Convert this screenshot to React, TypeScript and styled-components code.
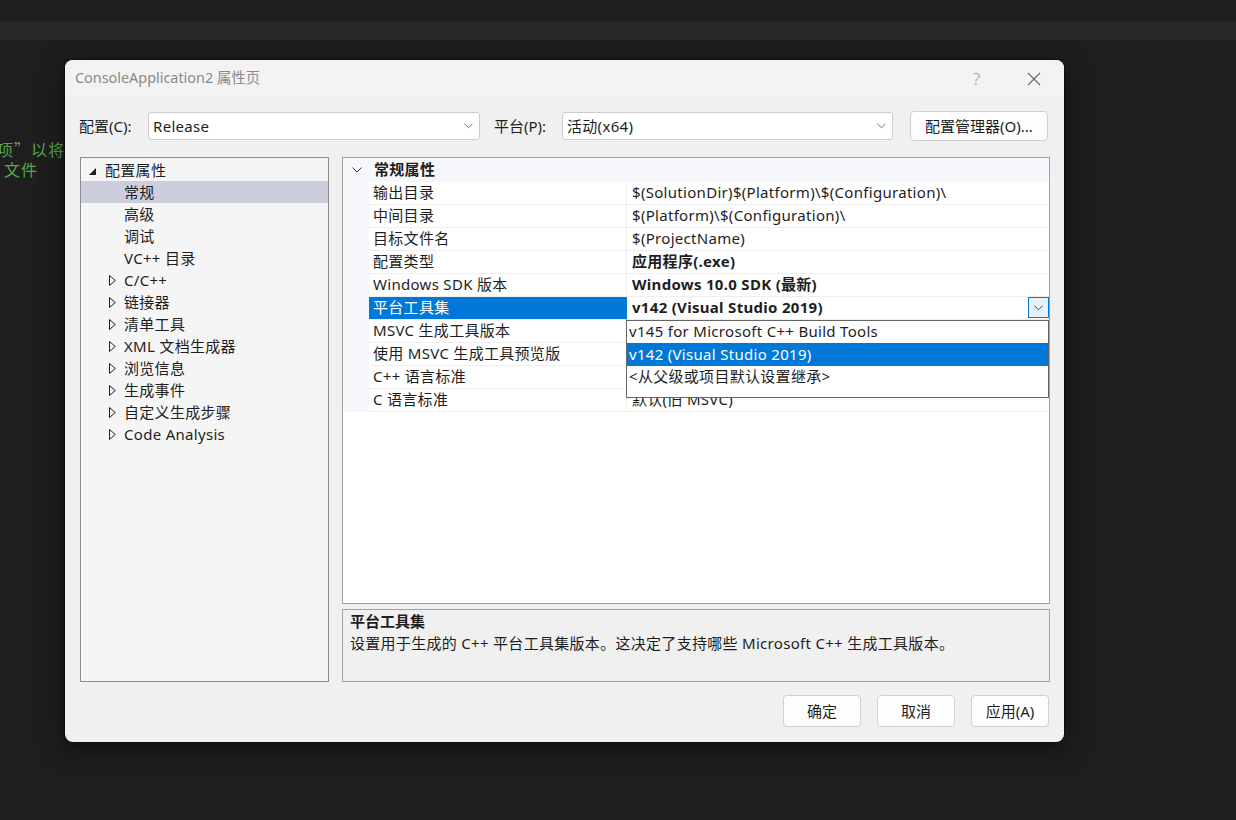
import styled, { createGlobalStyle, css } from 'styled-components'

const FONT = `"Noto Sans", "Noto Sans CJK SC", sans-serif`

const GlobalStyle = createGlobalStyle`
  html, body {
    margin: 0;
    padding: 0;
    background: #1e1e1e;
    overflow: hidden;
  }
  body {
    font-family: ${FONT};
  }
`

interface TreeItem {
  label: string
  level: number
  icon?: 'open' | 'closed'
  selected?: boolean
}

const treeItems: TreeItem[] = [
  { label: '配置属性', level: 0, icon: 'open' },
  { label: '常规', level: 1, selected: true },
  { label: '高级', level: 1 },
  { label: '调试', level: 1 },
  { label: 'VC++ 目录', level: 1 },
  { label: 'C/C++', level: 1, icon: 'closed' },
  { label: '链接器', level: 1, icon: 'closed' },
  { label: '清单工具', level: 1, icon: 'closed' },
  { label: 'XML 文档生成器', level: 1, icon: 'closed' },
  { label: '浏览信息', level: 1, icon: 'closed' },
  { label: '生成事件', level: 1, icon: 'closed' },
  { label: '自定义生成步骤', level: 1, icon: 'closed' },
  { label: 'Code Analysis', level: 1, icon: 'closed' },
]

interface Prop {
  name: string
  value: string
  bold?: boolean
  selected?: boolean
}

const props: Prop[] = [
  { name: '输出目录', value: '$(SolutionDir)$(Platform)\\$(Configuration)\\' },
  { name: '中间目录', value: '$(Platform)\\$(Configuration)\\' },
  { name: '目标文件名', value: '$(ProjectName)' },
  { name: '配置类型', value: '应用程序(.exe)', bold: true },
  { name: 'Windows SDK 版本', value: 'Windows 10.0 SDK (最新)', bold: true },
  { name: '平台工具集', value: 'v142 (Visual Studio 2019)', bold: true, selected: true },
  { name: 'MSVC 生成工具版本', value: '' },
  { name: '使用 MSVC 生成工具预览版', value: '' },
  { name: 'C++ 语言标准', value: '' },
  { name: 'C 语言标准', value: '默认(旧 MSVC)' },
]

const options = [
  { label: 'v145 for Microsoft C++ Build Tools' },
  { label: 'v142 (Visual Studio 2019)', active: true },
  { label: '<从父级或项目默认设置继承>' },
]

const Chevron = ({ size = 9, color = '#606060' }: { size?: number; color?: string }) => (
  <svg width={size} height={Math.round(size / 2) + 1} viewBox="0 0 10 6">
    <path d="M0.5 0.5 L5 5 L9.5 0.5" fill="none" stroke={color} strokeWidth="1" />
  </svg>
)

const TreeGlyph = ({ kind }: { kind: 'open' | 'closed' }) =>
  kind === 'open' ? (
    <svg width="7" height="7" viewBox="0 0 7 7">
      <polygon points="7,0 7,7 0,7" fill="#1e1e1e" />
    </svg>
  ) : (
    <svg width="7" height="11" viewBox="0 0 7 11">
      <polygon points="0.5,0.5 6.3,5.5 0.5,10.5" fill="none" stroke="#1e1e1e" strokeWidth="1" />
    </svg>
  )

export default function App() {
  return (
    <>
      <GlobalStyle />
      <Screen>
        <TopBand />
        <Editor>
          <CodeLine $indent={-3}>项”以将</CodeLine>
          <CodeLine $indent={4}>文件</CodeLine>
        </Editor>

        <Dialog>
          <TitleBar>
            <Title>ConsoleApplication2 属性页</Title>
            <TitleButton>?</TitleButton>
            <TitleButton>
              <svg width="14" height="14" viewBox="0 0 14 14">
                <path d="M1 1 L13 13 M13 1 L1 13" stroke="#6a6a6a" strokeWidth="1.1" />
              </svg>
            </TitleButton>
          </TitleBar>

          <Body>
            <ConfigRow>
              <FieldLabel>配置(C):</FieldLabel>
              <Select $width={332}>
                <span>Release</span>
                <Chevron />
              </Select>
              <FieldLabel>平台(P):</FieldLabel>
              <Select $width={331}>
                <span>活动(x64)</span>
                <Chevron />
              </Select>
              <Button $width={138} $height={30}>配置管理器(O)...</Button>
            </ConfigRow>

            <Main>
              <Tree>
                {treeItems.map((item) => (
                  <TreeRow key={item.label} $level={item.level} $selected={item.selected}>
                    <GlyphSlot $level={item.level}>{item.icon && <TreeGlyph kind={item.icon} />}</GlyphSlot>
                    {item.label}
                  </TreeRow>
                ))}
              </Tree>

              <RightColumn>
                <Grid>
                  <GroupHeader>
                    <GroupToggle>
                      <Chevron size={10} color="#333" />
                    </GroupToggle>
                    <GroupTitle>常规属性</GroupTitle>
                  </GroupHeader>
                  {props.map((p) => (
                    <PropRow key={p.name}>
                      <Gutter />
                      <NameCell $selected={p.selected}>{p.name}</NameCell>
                      <ValueCell $bold={p.bold}>
                        <span>{p.value}</span>
                        {p.selected && (
                          <DropButton>
                            <Chevron size={9} color="#333" />
                          </DropButton>
                        )}
                      </ValueCell>
                    </PropRow>
                  ))}
                  <GridFill>
                    <Gutter />
                  </GridFill>

                  <DropList>
                    {options.map((o) => (
                      <DropItem key={o.label} $active={o.active}>
                        {o.label}
                      </DropItem>
                    ))}
                  </DropList>
                </Grid>

                <Description>
                  <DescTitle>平台工具集</DescTitle>
                  <DescText>设置用于生成的 C++ 平台工具集版本。这决定了支持哪些 Microsoft C++ 生成工具版本。</DescText>
                </Description>
              </RightColumn>
            </Main>

            <Footer>
              <Button $width={78} $height={32}>确定</Button>
              <Button $width={78} $height={32}>取消</Button>
              <Button $width={78} $height={32}>应用(A)</Button>
            </Footer>
          </Body>
        </Dialog>
      </Screen>
    </>
  )
}

const Screen = styled.div`
  position: relative;
  width: 1236px;
  height: 820px;
  background: #1e1e1e;
  overflow: hidden;
`

const TopBand = styled.div`
  margin-top: 21px;
  height: 19px;
  background: #282828;
`

const Editor = styled.div`
  padding-top: 99px;
  display: flex;
  flex-direction: column;
`

const CodeLine = styled.div<{ $indent: number }>`
  margin-left: ${({ $indent }) => $indent}px;
  font-family: "Noto Sans CJK SC", sans-serif;
  font-size: 16px;
  line-height: 20px;
  letter-spacing: 1px;
  color: #57a64a;
  white-space: nowrap;
`

const Dialog = styled.div`
  position: absolute;
  left: 65px;
  top: 60px;
  width: 999px;
  height: 682px;
  border-radius: 8px;
  background: #f0f0f0;
  box-shadow: 0 6px 24px rgba(0, 0, 0, 0.55), 0 0 0 1px rgba(0, 0, 0, 0.35);
  display: flex;
  flex-direction: column;
  overflow: hidden;
  font-family: ${FONT};
  font-size: 15px;
  color: #1e1e1e;
`

const TitleBar = styled.div`
  height: 37px;
  background: #f3f3f3;
  display: flex;
  align-items: center;
  padding-left: 10px;
`

const Title = styled.div`
  flex: 1;
  font-size: 14.4px;
  color: #8a8a8a;
  line-height: 20px;
  margin-top: -2px;
`

const TitleButton = styled.div`
  width: 57px;
  height: 37px;
  display: flex;
  align-items: center;
  justify-content: center;
  color: #9a9a9a;
  font-size: 17px;
  font-weight: 300;
  &:last-child {
    margin-right: 2px;
  }
`

const Body = styled.div`
  flex: 1;
  display: flex;
  flex-direction: column;
  padding: 14px 15px 0 15px;
  letter-spacing: 0.3px;
`

const ConfigRow = styled.div`
  display: flex;
  align-items: center;
  height: 30px;
`

const FieldLabel = styled.div`
  width: 68px;
  flex-shrink: 0;
  line-height: 20px;
  letter-spacing: 0;
  &:first-child {
    margin-left: -1px;
    width: 69px;
  }
  &:nth-child(3) {
    margin-left: 14px;
  }
`

const Select = styled.div<{ $width: number }>`
  width: ${({ $width }) => $width}px;
  height: 28px;
  box-sizing: border-box;
  background: #ffffff;
  border: 1px solid #cccccc;
  border-radius: 3px;
  display: flex;
  align-items: center;
  justify-content: space-between;
  padding: 0 6px 0 4px;
  line-height: 20px;
`

const Button = styled.div<{ $width: number; $height: number }>`
  width: ${({ $width }) => $width}px;
  height: ${({ $height }) => $height}px;
  box-sizing: border-box;
  background: #fdfdfd;
  border: 1px solid #d0d0d0;
  border-radius: 4px;
  display: flex;
  align-items: center;
  justify-content: center;
  line-height: 20px;
  letter-spacing: 0;
  margin-left: 16px;
  &:first-child {
    margin-left: 0;
  }
  ${ConfigRow} & {
    margin-left: 17px;
  }
`

const Main = styled.div`
  margin-top: 16px;
  display: grid;
  grid-template-columns: 249px 708px;
  column-gap: 13px;
  height: 525px;
`

const Tree = styled.div`
  box-sizing: border-box;
  border: 1px solid #8c8c8c;
  background: #f5f5f5;
  padding-top: 1px;
`

const TreeRow = styled.div<{ $level: number; $selected?: boolean }>`
  height: 22px;
  line-height: 22px;
  display: flex;
  align-items: center;
  padding-left: ${({ $level }) => 5 + $level * 19}px;
  white-space: nowrap;
  ${({ $selected }) =>
    $selected &&
    css`
      background: #cccedb;
    `}
`

const GlyphSlot = styled.div<{ $level: number }>`
  width: 19px;
  height: 22px;
  display: flex;
  align-items: center;
  padding-left: ${({ $level }) => ($level === 0 ? 3 : 4)}px;
  box-sizing: border-box;
  svg {
    margin-top: ${({ $level }) => ($level === 0 ? 3 : 0)}px;
  }
`

const RightColumn = styled.div`
  display: flex;
  flex-direction: column;
  gap: 5px;
`

const Grid = styled.div`
  position: relative;
  height: 447px;
  box-sizing: border-box;
  border: 1px solid #a0a0a0;
  background: #ffffff;
  display: flex;
  flex-direction: column;
`

const GroupHeader = styled.div`
  height: 24px;
  background: #f5f7fa;
  display: flex;
  align-items: center;
`

const GroupToggle = styled.div`
  width: 26px;
  display: flex;
  justify-content: center;
  padding-left: 1px;
`

const GroupTitle = styled.div`
  font-weight: 700;
  padding-left: 4px;
  line-height: 22px;
  margin-top: -2px;
`

const PropRow = styled.div`
  display: grid;
  grid-template-columns: 26px 258px 1fr;
  height: 23px;
`

const Gutter = styled.div`
  background: #f5f7fa;
`

const NameCell = styled.div<{ $selected?: boolean }>`
  box-sizing: border-box;
  border-right: 1px solid #eeeeee;
  border-bottom: 1px solid #eeeeee;
  padding-left: 4px;
  line-height: 21px;
  white-space: nowrap;
  ${({ $selected }) =>
    $selected &&
    css`
      background: #0078d7;
      color: #ffffff;
      border-right-color: #0078d7;
    `}
`

const ValueCell = styled.div<{ $bold?: boolean }>`
  box-sizing: border-box;
  border-bottom: 1px solid #eeeeee;
  padding-left: 5px;
  line-height: 21px;
  display: flex;
  justify-content: space-between;
  align-items: flex-start;
  white-space: nowrap;
  font-weight: ${({ $bold }) => ($bold ? 700 : 400)};
`

const DropButton = styled.div`
  width: 21px;
  height: 21px;
  box-sizing: border-box;
  margin-top: 0;
  background: #e5f1fb;
  border: 1px solid #0078d7;
  display: flex;
  align-items: center;
  justify-content: center;
`

const GridFill = styled.div`
  flex: 1;
  display: grid;
  grid-template-columns: 26px 1fr;
  > div {
    background: #ffffff;
  }
`

const DropList = styled.div`
  position: absolute;
  left: 283px;
  top: 162px;
  width: 423px;
  height: 78px;
  box-sizing: border-box;
  border: 1px solid #646464;
  background: #ffffff;
`

const DropItem = styled.div<{ $active?: boolean }>`
  height: 22px;
  line-height: 21px;
  padding-left: 2px;
  white-space: nowrap;
  ${({ $active }) =>
    $active &&
    css`
      background: #0078d7;
      color: #ffffff;
      height: 23px;
      line-height: 22px;
    `}
`

const Description = styled.div`
  flex: 1;
  box-sizing: border-box;
  border: 1px solid #a0a0a0;
  background: #f0f0f0;
  padding: 0 7px;
`

const DescTitle = styled.div`
  font-weight: 700;
  line-height: 22px;
  letter-spacing: 0;
`

const DescText = styled.div`
  line-height: 22px;
  margin-top: 0;
`

const Footer = styled.div`
  display: flex;
  justify-content: flex-end;
  padding-top: 13px;
`
